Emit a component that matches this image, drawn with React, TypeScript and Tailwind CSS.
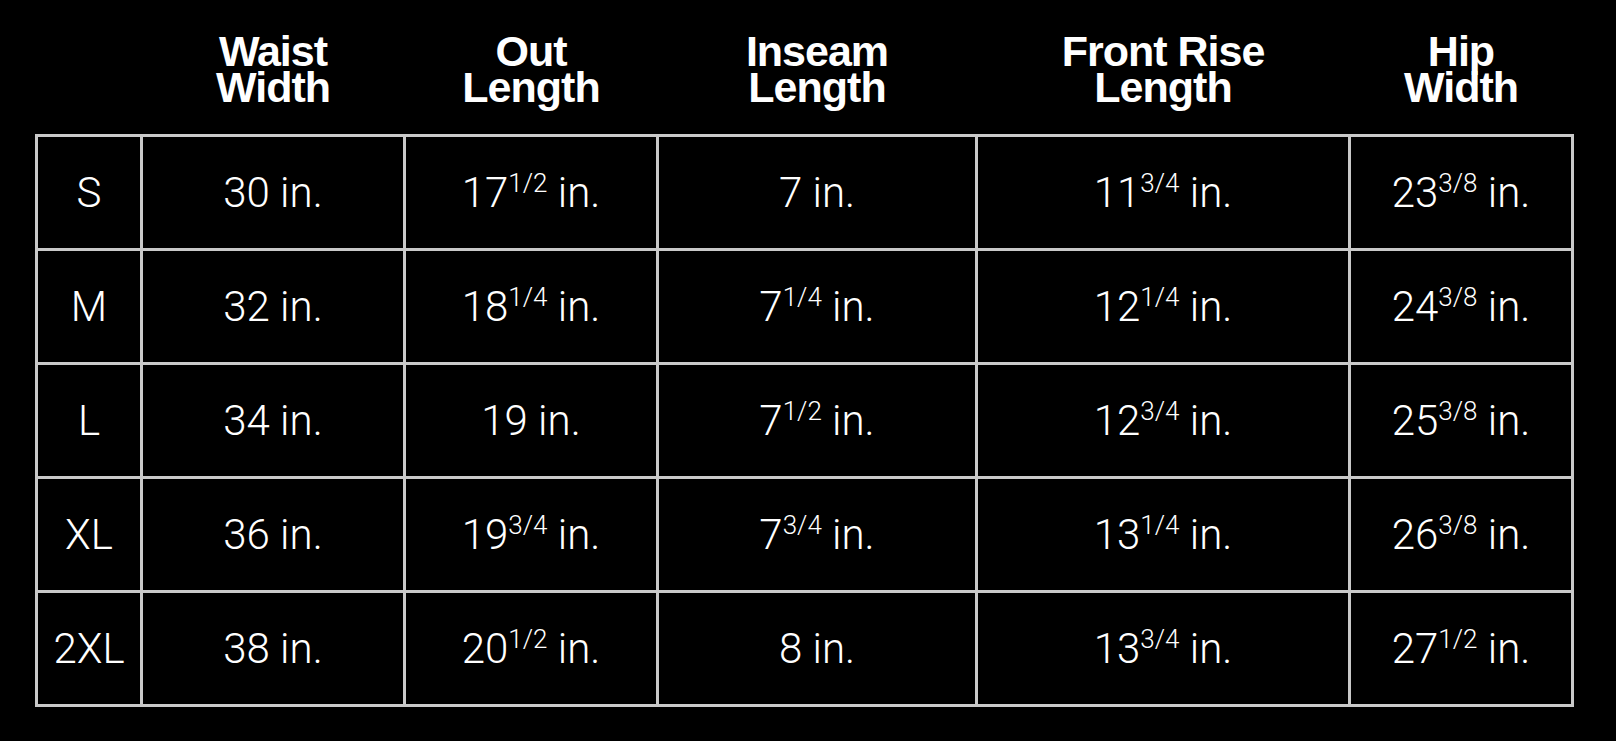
import React from "react";

type Val = { whole: string; frac?: string };

const headers: string[][] = [
  [],
  ["Waist", "Width"],
  ["Out", "Length"],
  ["Inseam", "Length"],
  ["Front Rise", "Length"],
  ["Hip", "Width"],
];

const rows: { size: string; vals: Val[] }[] = [
  {
    size: "S",
    vals: [
      { whole: "30" },
      { whole: "17", frac: "1/2" },
      { whole: "7" },
      { whole: "11", frac: "3/4" },
      { whole: "23", frac: "3/8" },
    ],
  },
  {
    size: "M",
    vals: [
      { whole: "32" },
      { whole: "18", frac: "1/4" },
      { whole: "7", frac: "1/4" },
      { whole: "12", frac: "1/4" },
      { whole: "24", frac: "3/8" },
    ],
  },
  {
    size: "L",
    vals: [
      { whole: "34" },
      { whole: "19" },
      { whole: "7", frac: "1/2" },
      { whole: "12", frac: "3/4" },
      { whole: "25", frac: "3/8" },
    ],
  },
  {
    size: "XL",
    vals: [
      { whole: "36" },
      { whole: "19", frac: "3/4" },
      { whole: "7", frac: "3/4" },
      { whole: "13", frac: "1/4" },
      { whole: "26", frac: "3/8" },
    ],
  },
  {
    size: "2XL",
    vals: [
      { whole: "38" },
      { whole: "20", frac: "1/2" },
      { whole: "8" },
      { whole: "13", frac: "3/4" },
      { whole: "27", frac: "1/2" },
    ],
  },
];

const cols = "grid-cols-[102px_260px_250px_316px_370px_220px]";

function Cell({ children }: { children: React.ReactNode }) {
  return (
    <div className="bg-black flex items-center justify-center h-[111px] text-white text-[42px] leading-none font-light font-['Roboto',sans-serif] whitespace-nowrap">
      {children}
    </div>
  );
}

export default function App() {
  return (
    <div className="w-[1616px] h-[741px] bg-black overflow-hidden pt-[33px] pl-[35px]">
      <div className={`grid ${cols} gap-x-[3px] pl-[3px] h-[72px] mb-[29px] w-[1539px]`}>
        {headers.map((h, i) => (
          <div
            key={i}
            className="flex flex-col items-center text-white font-bold text-[43px] leading-[36px] tracking-[-1px] font-['Liberation_Sans',Arial,sans-serif] whitespace-nowrap"
          >
            {h.map((line) => (
              <span key={line}>{line}</span>
            ))}
          </div>
        ))}
      </div>
      <div className={`grid ${cols} gap-[3px] p-[3px] bg-[#c9c9c9] w-[1539px]`}>
        {rows.map((r) => (
          <React.Fragment key={r.size}>
            <Cell>{r.size}</Cell>
            {r.vals.map((v, j) => (
              <Cell key={j}>
                <span>
                  {v.whole}
                  {v.frac && (
                    <span className="align-top text-[26px] leading-[22px]">{v.frac}</span>
                  )}
                  {" in."}
                </span>
              </Cell>
            ))}
          </React.Fragment>
        ))}
      </div>
    </div>
  );
}
